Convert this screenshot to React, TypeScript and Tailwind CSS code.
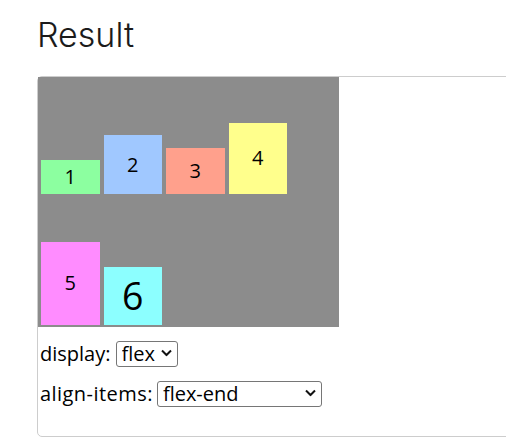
const items = [
  { id: 1, bg: "bg-[#8cffa0]", h: "h-[37.5px]", text: "text-[20px]" },
  { id: 2, bg: "bg-[#a0c8ff]", h: "h-[62.5px]", text: "text-[20px]" },
  { id: 3, bg: "bg-[#ffa08c]", h: "h-[50px]", text: "text-[20px]" },
  { id: 4, bg: "bg-[#ffff8c]", h: "h-[75px]", text: "text-[20px]" },
  { id: 5, bg: "bg-[#ff8cff]", h: "h-[87.5px]", text: "text-[20px]" },
  { id: 6, bg: "bg-[#8cffff]", h: "h-[62.5px]", text: "text-[37.5px]" },
];

function Chevron() {
  return (
    <svg width="11" height="7" viewBox="0 0 11 7" fill="none" className="pointer-events-none absolute top-1/2 -translate-y-1/2 right-[6px]">
      <path d="M1 1 L5.5 5.5 L10 1" stroke="#111" strokeWidth="2" />
    </svg>
  );
}

function FakeSelect({ value, width }: { value: string; width: string }) {
  return (
    <div className={`relative ${width}`}>
      <select
        defaultValue={value}
        className="h-[26px] w-full appearance-none rounded-[3px] border border-[#767676] bg-white pl-[5px] text-[20px] leading-[24px] tracking-normal text-black outline-none"
      >
        <option value={value}>{value}</option>
      </select>
      <Chevron />
    </div>
  );
}

export default function App() {
  return (
    <div className="h-[440px] w-[506px] overflow-hidden bg-white" style={{ fontFamily: "'Open Sans', 'Noto Sans', sans-serif" }}>
      <div className="pl-[37px] pt-[16.5px]">
        <h2 className="h-[35px] text-[34px] font-light leading-[35px] text-[#1b1b1b]" style={{ fontFamily: "Inter, sans-serif" }}>
          Result
        </h2>
        <div className="mt-[24.5px] h-[361px] w-[520px] rounded-[5px] border border-[#cdcdcd]">
          {/* flex container */}
          <div className="flex h-[250px] w-[301px] flex-wrap items-end bg-[#8c8c8c] pl-[1px]">
            {items.map((item) => (
              <div
                key={item.id}
                className={`flex w-[62.5px] flex-col justify-center border-[2.5px] border-[#8c8c8c] text-center text-black ${item.bg} ${item.h} ${item.text}`}
              >
                {item.id}
              </div>
            ))}
          </div>

          <div className="mt-[12.5px] flex h-[27px] items-center gap-[5px] pl-[2px] text-[20px] leading-[27px] text-black">
            <span>display:</span>
            <FakeSelect value="flex" width="w-[62px]" />
          </div>
          <div className="mt-[13px] flex h-[27px] items-center gap-[4px] pl-[2px] text-[20px] leading-[27px] text-black">
            <span className="tracking-[0.45px]">align-items:</span>
            <FakeSelect value="flex-end" width="w-[165px]" />
          </div>
        </div>
      </div>
    </div>
  );
}
